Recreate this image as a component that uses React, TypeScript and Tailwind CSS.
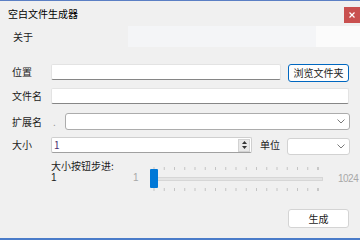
export default function App() {
  const ticks = Array.from({ length: 17 }, (_, i) => 6 + i * 10.25);

  return (
    <div className="w-[360px] h-[240px] bg-[#f0f0f0] overflow-hidden flex flex-col whitespace-nowrap font-['Noto_Sans_CJK_SC','Noto_Sans',sans-serif] text-[10px] leading-[12px] text-[#1b1b1b]">
      <div className="h-px bg-[#5b7fc4]" />

      {/* title bar */}
      <div className="h-[25px] flex items-start justify-between">
        <span className="ml-[8px] mt-[7px] text-black">空白文件生成器</span>
        <div className="mt-[6px] w-4 h-4 bg-[#c9504f] flex items-center justify-center">
          <svg width="6" height="6" viewBox="0 0 6 6">
            <path d="M0.5 0.5 L5.5 5.5 M5.5 0.5 L0.5 5.5" stroke="#fff" strokeWidth="1.2" />
          </svg>
        </div>
      </div>

      {/* about */}
      <div className="h-[21px] flex">
        <span className="w-[128px] pl-[13px] flex items-center">关于</span>
        <div className="flex-1 flex">
          <div className="flex-1 bg-[#f4f5f7]" />
          <div className="w-[44px] bg-[#fbfbfb]" />
        </div>
      </div>

      {/* location */}
      <div className="mt-[17px] h-[18px] flex items-start">
        <span className="w-[51px] pl-[12px] h-[16px] flex items-center">位置</span>
        <div className="w-[230px] h-[16px] bg-white border border-[#e3e3e3] border-b-[#868686] rounded-[2px]" />
        <button className="ml-[7px] w-[61px] h-[18px] bg-[#fdfdfd] border border-[#0067c0] rounded-[3px] flex items-center justify-center">
          浏览文件夹
        </button>
      </div>

      {/* file name */}
      <div className="mt-[6px] h-[16px] flex items-start">
        <span className="w-[51px] pl-[12px] h-[16px] flex items-center">文件名</span>
        <div className="w-[298px] h-[16px] bg-white border border-[#e3e3e3] border-b-[#868686] rounded-[2px]" />
      </div>

      {/* extension */}
      <div className="mt-[9px] h-[17px] flex items-center">
        <span className="w-[41px] shrink-0 pl-[12px]">扩展名</span>
        <span className="w-[24px] shrink-0 pl-[12px] text-[#9a9a9a] leading-[8px]">.</span>
        <div className="w-[285px] h-[17px] bg-white border border-[#acacac] rounded-[3px] flex items-center justify-end pr-[4px]">
          <svg width="8" height="5" viewBox="0 0 8 5">
            <path d="M0.5 0.5 L4 4 L7.5 0.5" stroke="#7a7a7a" fill="none" strokeWidth="1" />
          </svg>
        </div>
      </div>

      {/* size */}
      <div className="mt-[7px] h-[18px] flex items-start">
        <span className="w-[51px] pl-[12px] h-[16px] flex items-center">大小</span>
        <div className="w-[201px] h-[16px] bg-white border border-[#cfcfcf] border-b-[#a0a0a0] rounded-[2px] flex items-center">
          <span className="flex-1 pl-[2px] text-[#4a2f6e]">1</span>
          <div className="w-[12px] h-[13px] mr-[1px] bg-[#e8e8e8] border border-[#d2d2d2] flex flex-col items-center justify-center gap-[2px]">
            <svg width="5" height="3" viewBox="0 0 5 3">
              <path d="M0 3 L2.5 0 L5 3 Z" fill="#333" />
            </svg>
            <svg width="5" height="3" viewBox="0 0 5 3">
              <path d="M0 0 L2.5 3 L5 0 Z" fill="#333" />
            </svg>
          </div>
        </div>
        <span className="ml-[8px] w-[27px] h-[16px] flex items-center">单位</span>
        <div className="mt-px w-[63px] h-[17px] bg-white border border-[#d2d2d2] rounded-[3px] flex items-center justify-end pr-[4px]">
          <svg width="8" height="5" viewBox="0 0 8 5">
            <path d="M0.5 0.5 L4 4 L7.5 0.5" stroke="#7a7a7a" fill="none" strokeWidth="1" />
          </svg>
        </div>
      </div>

      {/* step slider */}
      <div className="mt-[5px] h-[32px] flex items-start">
        <div className="ml-[51px] w-[82px] flex flex-col">
          <span className="leading-[12px]">大小按钮步进:</span>
          <span className="mt-[1px] leading-[10px] font-['Liberation_Sans',sans-serif]">1</span>
        </div>
        <span className="mt-[13px] w-[15px] leading-[10px] text-[#a8a8a8] font-['Liberation_Sans',sans-serif]">1</span>
        <svg className="mt-[6px]" width="178" height="26" viewBox="0 0 178 26">
          {ticks.map((x, i) => (
            <line key={"t" + i} x1={x} y1="1" x2={x} y2="4" stroke={i === 16 ? "#a0a0a0" : "#c4c4c4"} strokeWidth="1" />
          ))}
          <rect x="2.5" y="11.5" width="172" height="3" fill="#e4e4e4" stroke="#d6d6d6" strokeWidth="1" />
          <rect x="2" y="3" width="8" height="19" rx="1" fill="#0078d7" />
          {ticks.map((x, i) => (
            <line key={"b" + i} x1={x} y1="22" x2={x} y2="25" stroke={i === 16 ? "#a0a0a0" : "#c4c4c4"} strokeWidth="1" />
          ))}
        </svg>
        <span className="mt-[13px] ml-[12px] leading-[11px] text-[10px] tracking-[-0.5px] text-[#a8a8a8] font-['Liberation_Sans',sans-serif]">1024</span>
      </div>

      {/* generate */}
      <div className="mt-[17px] h-[19px] flex justify-end pr-[11px]">
        <button className="w-[61px] h-[19px] bg-white border border-[#d4d4d4] rounded-[3px] flex items-center justify-center">
          生成
        </button>
      </div>

      <div className="flex-1" />
      <div className="h-[2px] bg-[#4a7cc9]" />
    </div>
  );
}
